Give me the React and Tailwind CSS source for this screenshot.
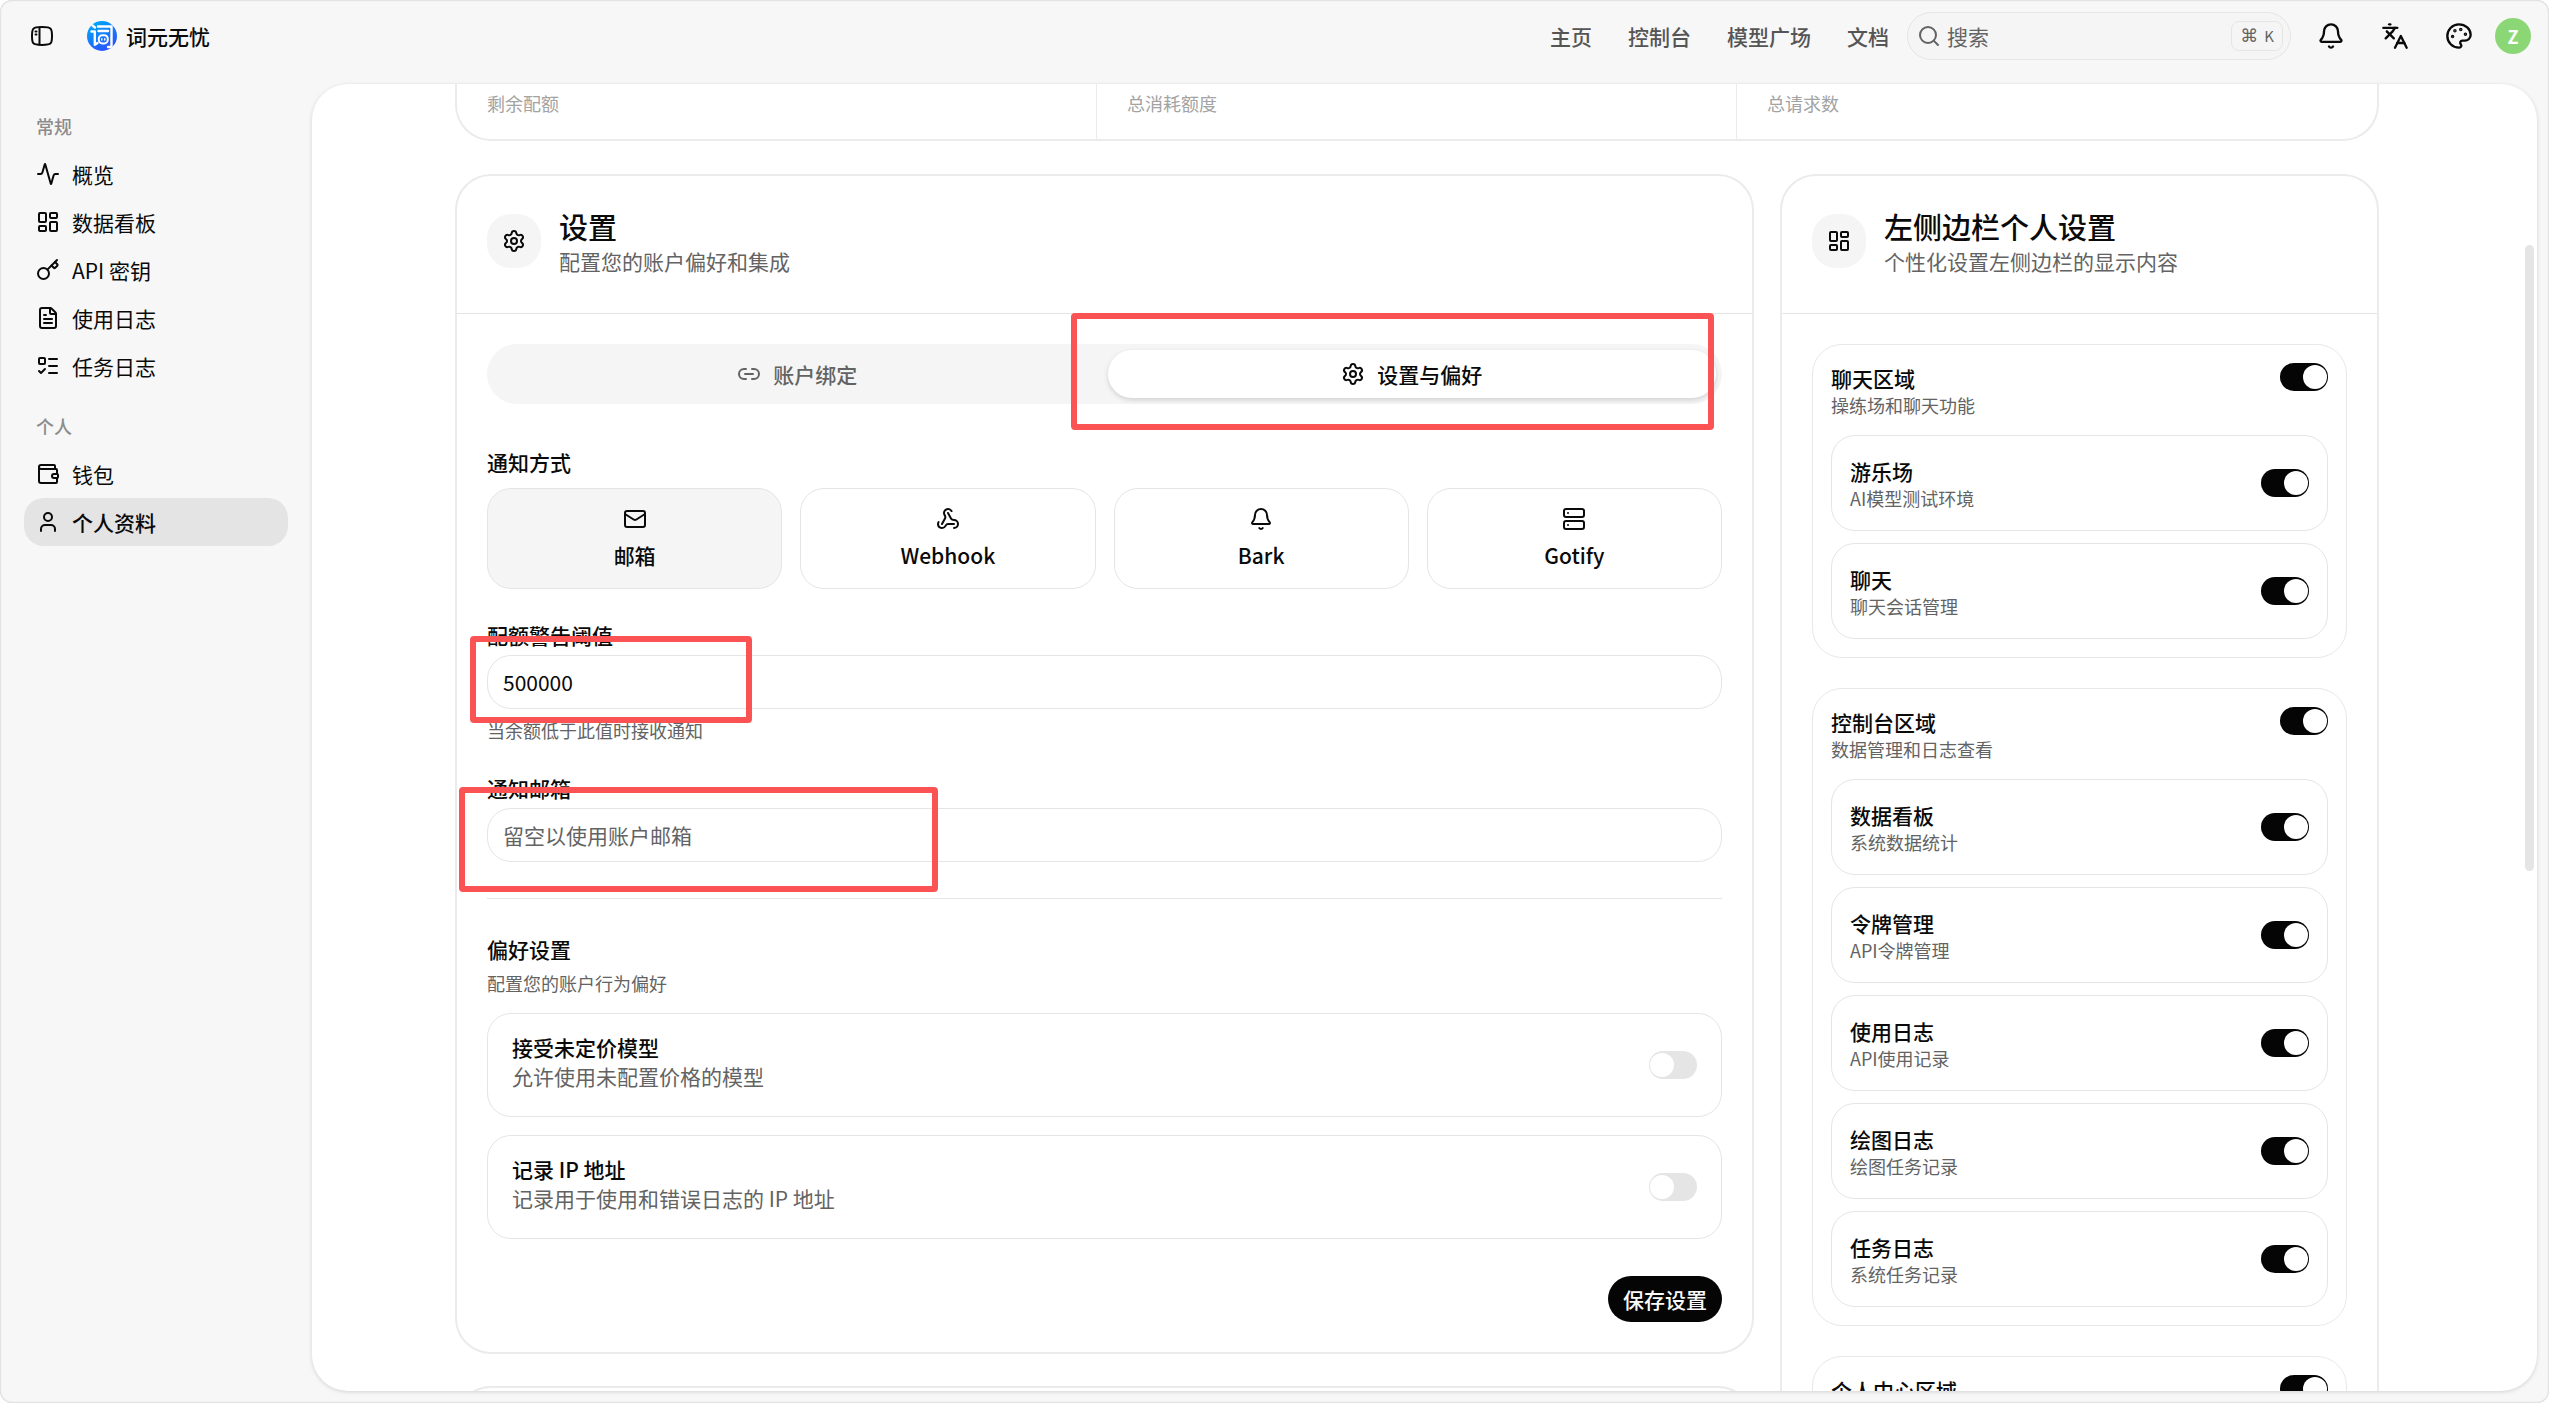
import React, { useState } from 'react';
import {
  Activity,
  Bell,
  FileText,
  Key,
  Languages,
  LayoutDashboard,
  Link2,
  ListTodo,
  Mail,
  Palette,
  Search,
  Server,
  Settings,
  User,
  Wallet,
  Webhook,
} from 'lucide-react';

const NAV_GROUPS = [
  {
    title: '常规',
    items: [
      { label: '概览', icon: Activity },
      { label: '数据看板', icon: LayoutDashboard },
      { label: 'API 密钥', icon: Key },
      { label: '使用日志', icon: FileText },
      { label: '任务日志', icon: ListTodo },
    ],
  },
  {
    title: '个人',
    items: [
      { label: '钱包', icon: Wallet },
      { label: '个人资料', icon: User, active: true },
    ],
  },
];

const TOP_LINKS = ['主页', '控制台', '模型广场', '文档'];

const STATS = ['剩余配额', '总消耗额度', '总请求数'];

const CHANNELS = [
  { id: 'email', label: '邮箱', icon: Mail },
  { id: 'webhook', label: 'Webhook', icon: Webhook },
  { id: 'bark', label: 'Bark', icon: Bell },
  { id: 'gotify', label: 'Gotify', icon: Server },
];

const PREFERENCES = [
  { id: 'unpriced', title: '接受未定价模型', desc: '允许使用未配置价格的模型' },
  { id: 'record-ip', title: '记录 IP 地址', desc: '记录用于使用和错误日志的 IP 地址' },
];

const SECTIONS = [
  {
    id: 'chat',
    title: '聊天区域',
    desc: '操练场和聊天功能',
    modules: [
      { id: 'playground', title: '游乐场', desc: 'AI模型测试环境' },
      { id: 'chat', title: '聊天', desc: '聊天会话管理' },
    ],
  },
  {
    id: 'console',
    title: '控制台区域',
    desc: '数据管理和日志查看',
    modules: [
      { id: 'detail', title: '数据看板', desc: '系统数据统计' },
      { id: 'token', title: '令牌管理', desc: 'API令牌管理' },
      { id: 'log', title: '使用日志', desc: 'API使用记录' },
      { id: 'midjourney', title: '绘图日志', desc: '绘图任务记录' },
      { id: 'task', title: '任务日志', desc: '系统任务记录' },
    ],
  },
  {
    id: 'personal',
    title: '个人中心区域',
    modules: [],
  },
];

const SidebarIcon = () => (
  <svg width="24" height="24" viewBox="0 0 24 24" fill="none" stroke="currentColor" strokeWidth="2" strokeLinecap="round">
    <path d="M2 12c0-4 0-5.700 1.300-7.200C4.800 3 7 3 12 3s7.200 0 8.700 1.800C22 6.300 22 8 22 12s0 5.700-1.300 7.200C19.200 21 17 21 12 21s-7.200 0-8.700-1.800C2 17.700 2 16 2 12Z" />
    <path d="M9.500 3.500v17" />
    <path d="M5.500 7.500h1M5.500 10.500h1" />
  </svg>
);

const Logo = () => (
  <svg width="30" height="30" viewBox="0 0 30 30" fill="none">
    <defs>
      <linearGradient id="logo-fill" x1="6" y1="2" x2="22" y2="29" gradientUnits="userSpaceOnUse">
        <stop stopColor="#00a5fd" />
        <stop offset="1" stopColor="#2b50fb" />
      </linearGradient>
    </defs>
    <circle cx="15" cy="15" r="15" fill="url(#logo-fill)" />
    <g stroke="#fff" strokeWidth="2.4" strokeLinecap="round" strokeLinejoin="round">
      <path d="M5.5 4.5 8 6.5" />
      <path d="M4.5 10.5h3.300v13.200l2.700-1.800" />
      <path d="M11 5.500h13.500v19.300c0 .8-.6 1.200-1.500 1.200h-2" />
      <path d="M11.500 10h9.500" />
    </g>
    <rect x="11.8" y="14.2" width="9" height="8.2" rx="3.6" stroke="#fff" strokeWidth="2" />
    <path d="M14.800 17.700v1.400M17.800 17.700v1.400" stroke="#fff" strokeWidth="1.4" strokeLinecap="round" />
  </svg>
);

const Switch = ({ id, defaultChecked = false }) => (
  <input
    id={id}
    type="checkbox"
    role="switch"
    defaultChecked={defaultChecked}
    className="flex h-7 w-12 shrink-0 cursor-pointer appearance-none items-center rounded-full bg-[#e5e5e5] px-px before:size-6 before:rounded-full before:bg-white checked:justify-end checked:bg-[#050505]"
  />
);

const CardHeader = ({ icon: Icon, title, desc }) => (
  <div className="flex items-start gap-[18px] border-b border-[#e5e5e5] px-[30px] pt-8 pb-[34px]">
    <div className="mt-1.5 flex size-[54px] shrink-0 items-center justify-center rounded-3xl bg-[#f5f5f5]">
      <Icon size={24} />
    </div>
    <div>
      <h2 className="text-[29px] leading-9 font-medium">{title}</h2>
      <p className="text-[21px] leading-[35px] text-[#636363]">{desc}</p>
    </div>
  </div>
);

const Header = () => (
  <header className="flex h-[72px] items-center pr-[18px] pl-[30px]">
    <button type="button" aria-label="切换侧边栏" className="mr-[33px]">
      <SidebarIcon />
    </button>
    <a href="#home" className="flex items-center gap-[9px] font-medium">
      <Logo />
      词元无忧
    </a>
    <nav className="ml-auto flex gap-9 pr-[18px] font-medium text-[#555]">
      {TOP_LINKS.map((label) => (
        <a key={label} href={`#${label}`}>
          {label}
        </a>
      ))}
    </nav>
    <div className="flex h-12 w-96 items-center gap-1.5 rounded-3xl border border-[#e5e5e5] bg-[#f5f5f5] pr-[7px] pl-[9px] text-[#636363]">
      <Search size={24} className="shrink-0" />
      <input
        type="search"
        aria-label="搜索"
        placeholder="搜索"
        className="w-full min-w-0 bg-transparent outline-none placeholder:text-[#636363]"
      />
      <kbd className="flex h-[30px] w-[52px] shrink-0 items-center justify-center gap-1.5 rounded-lg border border-[#e5e5e5] font-['Noto_Sans_CJK_SC',sans-serif] text-[15px]">
        <span className="font-['DejaVu_Sans',sans-serif] text-lg">⌘</span>K
      </kbd>
    </div>
    <div className="ml-[26px] flex items-center gap-9">
      <button type="button" aria-label="通知">
        <Bell size={28} />
      </button>
      <button type="button" aria-label="语言">
        <Languages size={28} />
      </button>
      <button type="button" aria-label="主题">
        <Palette size={28} />
      </button>
    </div>
    <button
      type="button"
      aria-label="账户"
      className="ml-[22px] flex size-9 items-center justify-center rounded-full bg-[#8cd775] text-lg font-bold text-white"
    >
      Z
    </button>
  </header>
);

const Sidebar = () => (
  <aside className="flex w-[312px] shrink-0 flex-col gap-3 px-6 pt-[18px]">
    {NAV_GROUPS.map((group) => (
      <section key={group.title}>
        <h3 className="flex h-12 items-center px-3 text-lg font-medium text-[#8c8c8c]">{group.title}</h3>
        {group.items.map(({ label, icon: Icon, active }) => (
          <a
            key={label}
            href={`#${label}`}
            className={
              active
                ? 'flex h-12 items-center gap-3 rounded-[20px] bg-[#e4e4e4] px-3 font-medium'
                : 'flex h-12 items-center gap-3 rounded-[20px] px-3'
            }
          >
            <Icon size={24} />
            {label}
          </a>
        ))}
      </section>
    ))}
  </aside>
);

const SettingsCard = () => {
  const [channel, setChannel] = useState('email');

  return (
    <section className="relative rounded-[36px] border-2 border-[#ebebeb]">
      <CardHeader icon={Settings} title="设置" desc="配置您的账户偏好和集成" />
      <div className="p-[30px]">
        <div role="tablist" className="grid h-[60px] grid-cols-2 gap-1.5 rounded-[30px] bg-[#f5f5f5] p-1.5 font-medium">
          <button type="button" role="tab" aria-selected="false" className="flex items-center justify-center gap-3 text-[#636363]">
            <Link2 size={24} />
            账户绑定
          </button>
          <button
            type="button"
            role="tab"
            aria-selected="true"
            className="flex items-center justify-center gap-3 rounded-3xl bg-white shadow-[0_2px_5px_rgba(0,0,0,0.15)]"
          >
            <Settings size={24} />
            设置与偏好
          </button>
        </div>

        <h3 className="mt-11 leading-7 font-medium">通知方式</h3>
        <div className="mt-3 grid grid-cols-4 gap-[18px]">
          {CHANNELS.map(({ id, label, icon: Icon }) => (
            <button
              key={id}
              type="button"
              onClick={() => setChannel(id)}
              className={
                channel === id
                  ? 'flex h-[101px] flex-col items-center justify-center gap-2 rounded-3xl border border-[#e5e5e5] bg-[#f5f5f5] font-medium'
                  : 'flex h-[101px] flex-col items-center justify-center gap-2 rounded-3xl border border-[#e5e5e5] font-medium'
              }
            >
              <Icon size={24} />
              {label}
            </button>
          ))}
        </div>

        <label htmlFor="quota" className="mt-8 block leading-7 font-medium">
          配额警告阈值
        </label>
        <input
          id="quota"
          type="text"
          defaultValue="500000"
          className="mt-1.5 block h-[54px] w-full rounded-3xl border border-[#e5e5e5] px-[15px]"
        />
        <p className="mt-[9px] text-lg leading-6 text-[#636363]">当余额低于此值时接收通知</p>

        <label htmlFor="email" className="mt-8 block leading-7 font-medium">
          通知邮箱
        </label>
        <input
          id="email"
          type="email"
          placeholder="留空以使用账户邮箱"
          className="mt-1.5 block h-[54px] w-full rounded-3xl border border-[#e5e5e5] px-[15px] placeholder:text-[#636363]"
        />

        <hr className="mt-9 border-[#e5e5e5]" />

        <h3 className="mt-[34px] leading-8 font-medium">偏好设置</h3>
        <p className="mt-1.5 text-lg leading-6 text-[#636363]">配置您的账户行为偏好</p>
        <div className="mt-[18px] flex flex-col gap-[18px]">
          {PREFERENCES.map(({ id, title, desc }) => (
            <div key={id} className="flex h-[104px] items-center justify-between rounded-3xl border border-[#e5e5e5] px-6">
              <label htmlFor={id} className="pb-1.5">
                <span className="block leading-[29px] font-medium">{title}</span>
                <span className="block leading-[29px] text-[#636363]">{desc}</span>
              </label>
              <Switch id={id} />
            </div>
          ))}
        </div>

        <div className="mt-[37px] flex justify-end">
          <button type="button" className="h-[46px] rounded-3xl bg-[#050505] px-[15px] font-medium text-[#fafafa]">
            保存设置
          </button>
        </div>
      </div>

      {/* highlight frames */}
      <div className="pointer-events-none absolute top-[137px] right-[38px] h-[117px] w-[643px] rounded-sm border-6 border-[#fb5353]" />
      <div className="pointer-events-none absolute top-[460px] left-[13px] h-[87px] w-[282px] rounded-sm border-6 border-[#fb5353]" />
      <div className="pointer-events-none absolute top-[611px] left-0.5 h-[105px] w-[479px] rounded-sm border-6 border-[#fb5353]" />
    </section>
  );
};

const SidebarModulesCard = () => (
  <section className="w-[599px] shrink-0 rounded-[36px] border-2 border-[#ebebeb]">
    <CardHeader icon={LayoutDashboard} title="左侧边栏个人设置" desc="个性化设置左侧边栏的显示内容" />
    <div className="flex flex-col gap-[30px] p-[30px]">
      {SECTIONS.map((section) => (
        <div key={section.id} className="rounded-[30px] border border-[#e8e8e8] p-[18px]">
          <div className="flex items-start justify-between">
            <label htmlFor={`section-${section.id}`}>
              <span className="block leading-[30px] font-medium">{section.title}</span>
              {section.desc && <span className="block text-lg leading-6 text-[#636363]">{section.desc}</span>}
            </label>
            <Switch id={`section-${section.id}`} defaultChecked />
          </div>
          <div className="mt-[18px] flex flex-col gap-3">
            {section.modules.map((item) => (
              <div key={item.id} className="flex h-24 items-center justify-between rounded-3xl border border-[#e5e5e5] px-[18px]">
                <label htmlFor={`module-${item.id}`}>
                  <span className="block leading-[30px] font-medium">{item.title}</span>
                  <span className="block text-lg leading-6 text-[#636363]">{item.desc}</span>
                </label>
                <Switch id={`module-${item.id}`} defaultChecked />
              </div>
            ))}
          </div>
        </div>
      ))}
    </div>
  </section>
);

export default function App() {
  return (
    <div className="flex h-screen flex-col overflow-hidden rounded-xl bg-[#f7f7f7] font-['Noto_Sans_CJK_SC',sans-serif] text-[21px] leading-8 text-[#0a0a0a] shadow-[inset_0_0_2px_rgba(0,0,0,0.3)]">
      <Header />
      <div className="flex min-h-0 flex-1 pt-3 pr-3 pb-3">
        <Sidebar />
        <main className="relative flex-1 overflow-hidden rounded-[36px] bg-white pr-[15px] shadow-[0_1px_4px_rgba(0,0,0,0.15)]">
          <div className="mx-auto max-w-[1924px]">
            <div className="mb-[33px] grid h-[57px] grid-cols-3 divide-x divide-[#ebebeb] rounded-b-[36px] border-2 border-t-0 border-[#ebebeb]">
              {STATS.map((label) => (
                <div key={label} className="px-[30px] pt-[5px] text-lg leading-7 text-[#a3a3a3]">
                  {label}
                </div>
              ))}
            </div>
            <div className="flex items-start gap-[26px]">
              <div className="flex flex-1 flex-col gap-8">
                <SettingsCard />
                <section className="h-40 rounded-[36px] border-2 border-[#ebebeb]" />
              </div>
              <SidebarModulesCard />
            </div>
          </div>
          <div className="absolute top-[161px] right-[3px] h-[626px] w-[9px] rounded-full bg-[#e5e5e5]" />
        </main>
      </div>
    </div>
  );
}
